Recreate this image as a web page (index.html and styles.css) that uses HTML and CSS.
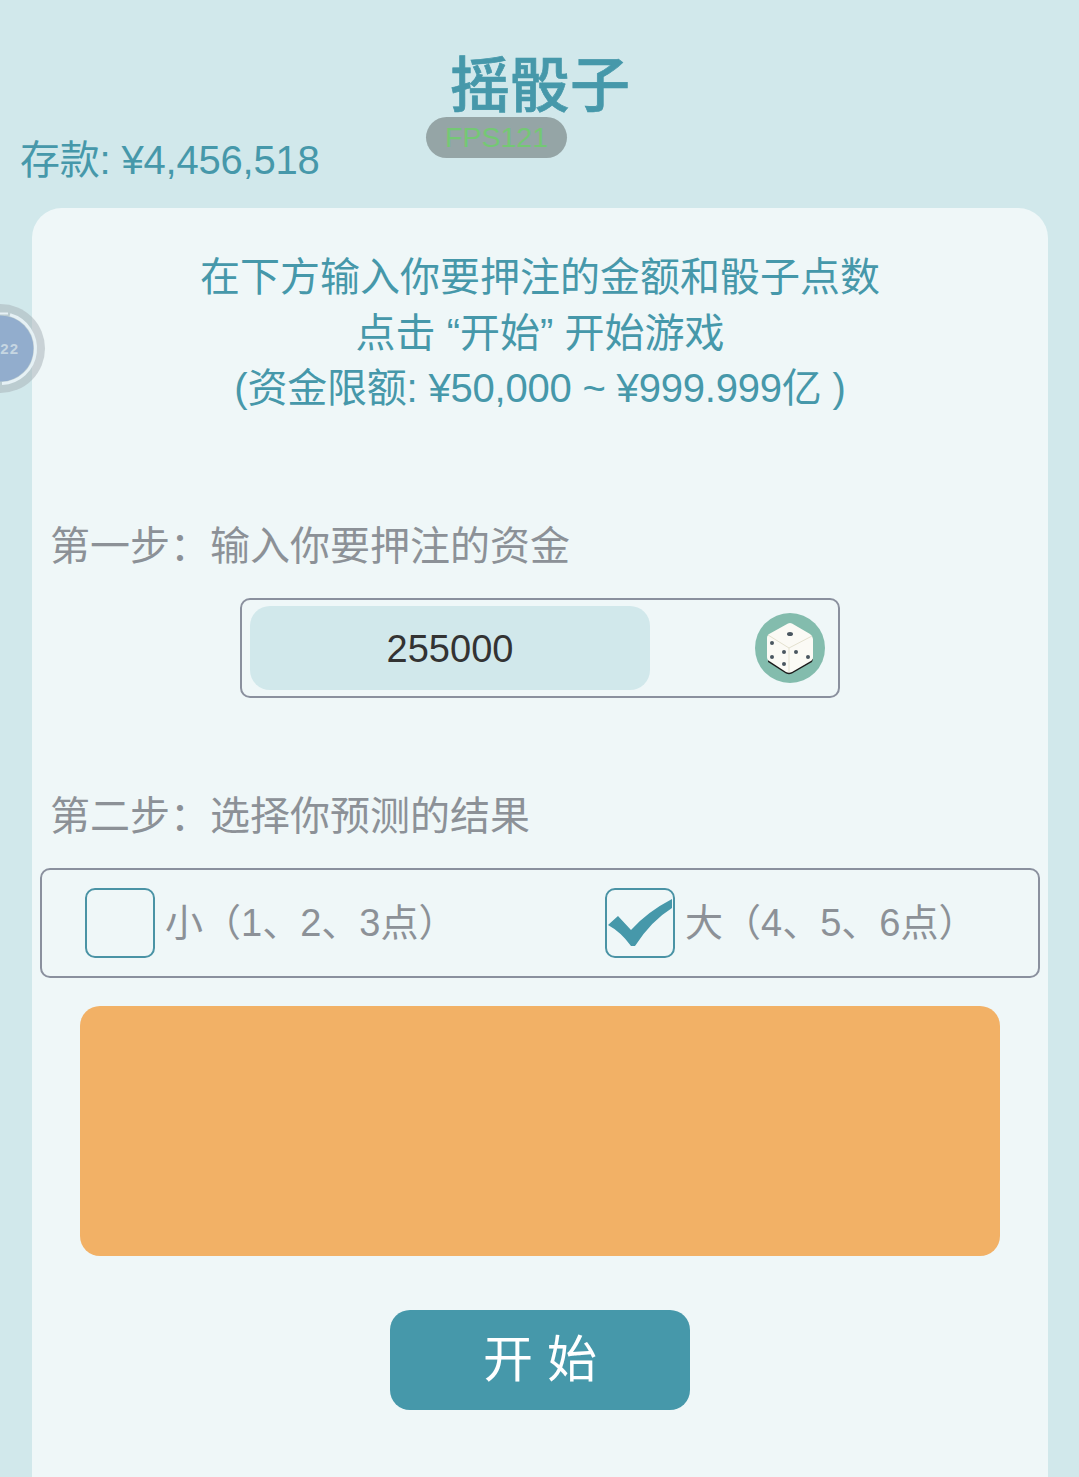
FILE: index.html
```html
<!DOCTYPE html>
<html lang="zh-CN">
<head>
    <meta charset="UTF-8">
    <title>摇骰子</title>
    <link rel="stylesheet" href="styles.css">
</head>
<body>
    <header class="top">
        <h1 class="top__title">摇骰子</h1>
        <div class="top__row">
            <div class="top__balance">存款: ¥4,456,518</div>
        </div>
        <div class="fps">FPS121</div>
    </header>

    <div class="float-ball">
        <svg class="float-ball__ring" viewBox="0 0 89 89">
            <circle cx="44.500" cy="44.500" r="33" fill="#92ADCD"/>
            <path d="M54 10.800 A35 35 0 0 1 46 79.470" fill="none" stroke="#E6F1F5" stroke-width="3"/>
            <path d="M44 9.500 L52 9.500" fill="none" stroke="#E6F1F5" stroke-width="2"/>
        </svg>
        <span class="float-ball__text">22</span>
    </div>

    <main class="card">
        <div class="intro">
            <div>在下方输入你要押注的金额和骰子点数</div>
            <div>点击 “开始” 开始游戏</div>
            <div class="intro__limit">(资金限额: ¥50,000 ~ ¥999.999亿 )</div>
        </div>

        <div class="step step--first">第一步：输入你要押注的资金</div>
        <div class="amount">
            <div class="amount__input">255000</div>
            <div class="amount__dice">
                <svg class="amount__dice-image" viewBox="0 0 70 70">
                    <path d="M13 46 L13 49 L31 60.500 Q34 62 37 60.500 L57 49 L58 46Z" fill="#1c1c1c"/>
                    <path d="M33 10.500 Q35 9.500 37 10.500 L55 21 Q58 23 58 26 L58 44 Q58 47 55 48.500 L37 59 Q34 60.500 31 59 L15 48.500 Q12 47 12 44 L12 25 Q12 22 15 20.500Z" fill="#fbfaf5"/>
                    <path d="M13 22 L34 35 L57 23 M34 35 L34 59" fill="none" stroke="#e4e1cf" stroke-width="1"/>
                    <g fill="#4a5660">
                        <ellipse cx="35" cy="21" rx="3" ry="2"/>
                        <circle cx="17" cy="30" r="2"/>
                        <circle cx="29" cy="39" r="2"/>
                        <circle cx="17" cy="44" r="2"/>
                        <circle cx="29" cy="51" r="2"/>
                        <circle cx="41" cy="39" r="2"/>
                        <circle cx="53" cy="44" r="2"/>
                    </g>
                </svg>
            </div>
        </div>

        <div class="step step--second">第二步：选择你预测的结果</div>
        <div class="choices">
            <div class="choice choice--small">
                <div class="choice__box"></div>
                <div class="choice__label">小（1、2、3点）</div>
            </div>
            <div class="choice choice--big">
                <div class="choice__box">
                    <svg class="choice__check" viewBox="0 0 70 70">
                        <path d="M3 37 L13 28 L26 42 Q42 24 67 11 L67 20 Q46 33 30 58 L26 58 Q16 44 3 37Z"/>
                    </svg>
                </div>
                <div class="choice__label">大（4、5、6点）</div>
            </div>
        </div>

        <div class="result"></div>

        <button class="start">开 始</button>
    </main>
</body>
</html>
```

FILE: styles.css
```css
html,
body {
    margin: 0;
    height: 100%;
}

body {
    height: 1477px;
    overflow: hidden;
    position: relative;

    background: #D1E8EB;

    font-family: "Liberation Sans", "Noto Sans CJK SC", sans-serif;
    color: #4698AA;
}

.top {
    height: 208px;
    box-sizing: border-box;
    padding-top: 47px;
}

.top__title {
    margin: 0;
    padding-left: 1px;

    text-align: center;

    font-family: "Noto Sans CJK SC", sans-serif;
    font-size: 60px;
    line-height: 68px;
    font-weight: 500;
    -webkit-text-stroke: 0.7px #4698AA;
}

.top__row {
    padding: 0 0 0 20px;
    margin-top: 19px;
}

.top__balance {
    font-size: 40px;
    line-height: 52px;
    letter-spacing: -0.2px;
}

.fps {
    position: absolute;
    top: 117px;
    left: 426px;

    width: 141px;
    height: 41px;
    border-radius: 21px;

    background: #95A5A6;
    color: #74C874;

    text-align: center;
    font-size: 28.500px;
    line-height: 41px;
}

.float-ball {
    position: absolute;
    z-index: 1;
    top: 304px;
    left: -44px;

    width: 89px;
    height: 89px;
    border-radius: 50%;

    background: rgba(170, 180, 185, 0.55);

    display: flex;
    align-items: center;
    justify-content: flex-end;
}

.float-ball__ring {
    position: absolute;
    top: 0;
    left: 0;
    width: 100%;
    height: 100%;
}

.float-ball__text {
    position: relative;
    padding-right: 26px;

    font-size: 15px;
    font-weight: 700;
    letter-spacing: 1px;

    color: #C6D6E2;
}

.card {
    margin: 0 31px 0 32px;
    height: 1300px;
    padding-top: 42px;
    box-sizing: border-box;

    background: #EFF7F8;
    border-radius: 30px 30px 0 0;
}

.intro {
    text-align: center;

    font-size: 40px;
    line-height: 55.500px;
}

.intro__limit {
    letter-spacing: -0.2px;
}

.step {
    padding-left: 18px;

    font-size: 40px;
    line-height: 56px;

    color: #8C9197;
}

.step--first {
    margin-top: 101px;
}

.step--second {
    margin-top: 90px;
}

.amount {
    width: 600px;
    height: 100px;
    margin: 24px auto 0;
    box-sizing: border-box;

    border: 2px solid #8A909E;
    border-radius: 10px;

    padding: 6px 13px 6px 8px;

    display: flex;
    align-items: center;
    justify-content: space-between;
}

.amount__input {
    width: 400px;
    height: 84px;

    background: #D1E8EB;
    border-radius: 20px;

    text-align: center;
    font-size: 38px;
    line-height: 86px;

    color: #333333;
}

.amount__dice {
    width: 70px;
    height: 70px;
    border-radius: 50%;
    background: #83BCAD;
}

.amount__dice-image {
    display: block;
    width: 100%;
    height: 100%;
}

.choices {
    height: 110px;
    margin: 24px 8px 0;
    box-sizing: border-box;

    border: 2px solid #8A909E;
    border-radius: 10px;

    display: flex;
    align-items: center;
}

.choice {
    display: flex;
    align-items: center;
    gap: 10px;
}

.choice--small {
    margin-left: 43px;
    width: 520px;
}

.choice__box {
    width: 70px;
    height: 70px;
    box-sizing: border-box;

    border: 2px solid #4A93A5;
    border-radius: 10px;
}

.choice__check {
    display: block;
    width: 70px;
    height: 70px;
    margin: -2px;
    fill: #4698AA;
}

.choice__label {
    font-size: 38px;
    line-height: 50px;

    color: #8C9197;
}

.result {
    height: 250px;
    margin: 28px 48px 0;

    background: #F2B166;
    border-radius: 20px;
}

.start {
    display: block;
    width: 300px;
    height: 100px;
    margin: 54px auto 0;
    padding: 0 0 9px;
    border: 0;
    border-radius: 20px;

    background: #4698AA;
    color: #FFFFFF;

    font-family: "Liberation Sans", "Noto Sans CJK SC", sans-serif;
    font-size: 50px;
}
```
